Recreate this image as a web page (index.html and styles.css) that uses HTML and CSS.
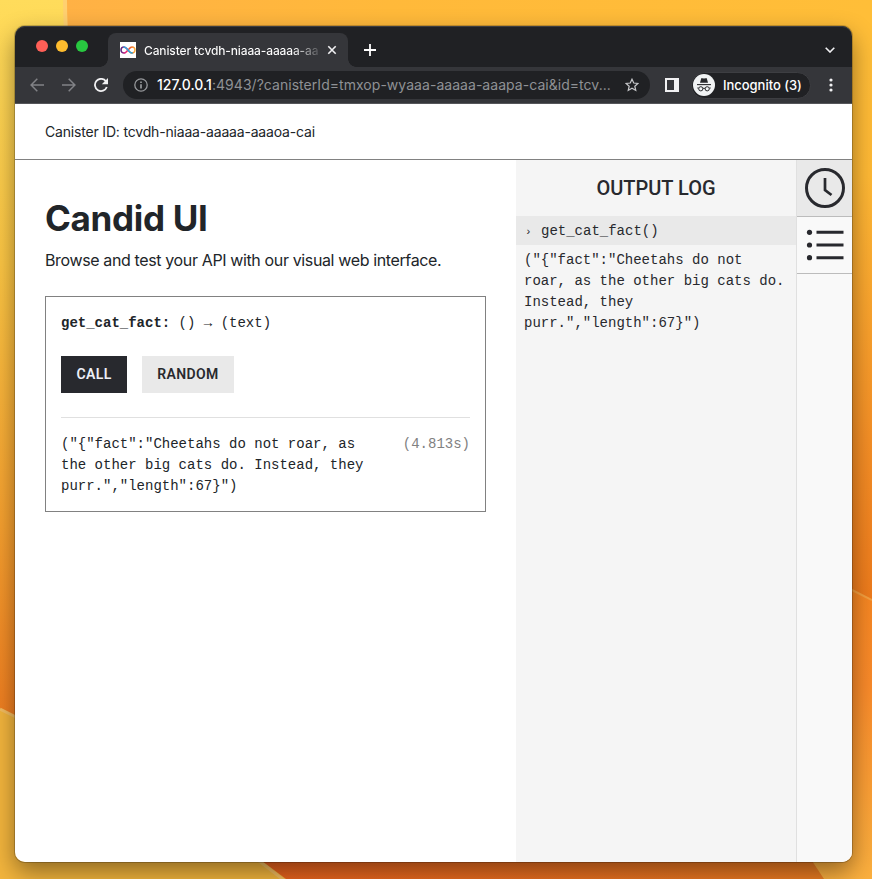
FILE: index.html
```html
<!DOCTYPE html>
<html lang="en">
<head>
<meta charset="utf-8">
<title>Candid UI</title>
<link rel="stylesheet" href="styles.css">
</head>
<body>
<svg class="wallpaper" viewBox="0 0 872 879" preserveAspectRatio="none" aria-hidden="true">
  <defs>
    <linearGradient id="left" x1="0" y1="0" x2="0" y2="1">
      <stop offset="0" stop-color="#ffdc5b"/><stop offset=".3" stop-color="#fcc644"/><stop offset=".6" stop-color="#f6a02f"/><stop offset=".82" stop-color="#ef7d20"/>
    </linearGradient>
    <linearGradient id="right" x1="0" y1="0" x2="0" y2="1">
      <stop offset="0" stop-color="#ffbe38"/><stop offset=".2" stop-color="#ffb935"/><stop offset=".5" stop-color="#f58f26"/><stop offset=".68" stop-color="#ee7b1c"/>
    </linearGradient>
    <linearGradient id="top" x1="0" y1="0" x2="1" y2="0">
      <stop offset="0" stop-color="#ffb145"/><stop offset=".4" stop-color="#ffb93a"/><stop offset="1" stop-color="#ffbe38"/>
    </linearGradient>
    <linearGradient id="lower" x1="0" y1="0" x2="0" y2="1">
      <stop offset="0" stop-color="#f5851f"/><stop offset=".4" stop-color="#f98a2a"/><stop offset="1" stop-color="#fbb03f"/>
    </linearGradient>
    <linearGradient id="bottom" x1="0" y1="0" x2="1" y2="0">
      <stop offset="0" stop-color="#e9601d"/><stop offset="1" stop-color="#ea7c22"/>
    </linearGradient>
  </defs>
  <rect width="436" height="879" fill="url(#left)"/>
  <rect x="436" width="436" height="879" fill="url(#right)"/>
  <path d="M66 0H872V70H72Q66 30 66 0Z" fill="url(#top)"/>
  <path d="M65 0Q65 25 68 60" fill="none" stroke="#ffd070" stroke-width="4"/>
  <path d="M780 555Q830 576 872 600V879H780Z" fill="url(#lower)"/>
  <path d="M850 589L872 600" stroke="#f5a040" stroke-width="2"/>
  <path d="M220 835H795L824 879H220Z" fill="url(#bottom)"/>
  <path d="M0 709Q150 775 286 879H0Z" fill="#f3b53d"/>
  <path d="M0 709L18 718M254 857L285 881" stroke="#f3bd61" stroke-width="3"/>
</svg>
<div class="window">
  <div class="tabstrip">
    <div class="lights"><i class="red"></i><i class="yellow"></i><i class="green"></i></div>
    <div class="tab">
      <svg class="favicon" viewBox="0 0 16 16">
        <defs><linearGradient id="inf"><stop offset="0" stop-color="#522785"/><stop offset=".35" stop-color="#ed1e79"/><stop offset=".65" stop-color="#f15a24"/><stop offset="1" stop-color="#fbb03b"/></linearGradient></defs>
        <rect width="16" height="16" fill="#fff"/>
        <path d="M8 8C6 5.500 5.200 4.900 4 4.900A3 3.100 0 0 0 4 11.100C5.200 11.100 6 10.500 8 8C10 5.500 10.800 4.900 12 4.900A3 3.100 0 0 1 12 11.100C10.800 11.100 10 10.500 8 8" fill="none" stroke="url(#inf)" stroke-width="1.500"/>
        <path d="M3.200 5.100C5.500 4.400 6.500 6.200 8 8S10.500 11.600 12.800 10.900" fill="none" stroke="#29abe2" stroke-width="1.500"/>
      </svg>
      <span class="tab-title">Canister tcvdh-niaaa-aaaaa-aa</span>
      <svg class="close" viewBox="0 0 10 10"><path d="M1.300 1.300l7.400 7.400M8.700 1.300L1.300 8.700" stroke="#f1f1f3" stroke-width="1.600"/></svg>
    </div>
    <svg class="plus" viewBox="0 0 12 12"><path d="M6 0v12M0 6h12" stroke="#fff" stroke-width="1.800"/></svg>
    <svg class="chevron" viewBox="0 0 10 6"><path d="M.7.700L5 5L9.300.700" fill="none" stroke="#f1f1f3" stroke-width="1.600"/></svg>
  </div>
  <div class="toolbar">
    <svg class="back" viewBox="0 0 14 14"><path d="M14 7H1.500M7.300 .8L1.100 7l6.200 6.200" fill="none" stroke="#818286" stroke-width="1.500"/></svg>
    <svg class="forward" viewBox="0 0 14 14"><path d="M0 7h12.500M6.700.8L12.900 7l-6.200 6.200" fill="none" stroke="#818286" stroke-width="1.500"/></svg>
    <svg class="reload" viewBox="0 0 14 14"><path d="M11.900 3.200A6.100 6.100 0 1 0 12.800 9" fill="none" stroke="#f1f1f3" stroke-width="1.800"/><path d="M14 0v6.200H7.800Z" fill="#f1f1f3"/></svg>
    <div class="address">
      <svg class="info" viewBox="0 0 14 14"><circle cx="7" cy="7" r="6.200" fill="none" stroke="#96989b" stroke-width="1.300"/><path d="M7 6.200v4.300M7 3.400v1.500" stroke="#96989b" stroke-width="1.700"/></svg>
      <span class="url"><b>127.0.0.1</b>:4943/?canisterId=tmxop-wyaaa-aaaaa-aaapa-cai&amp;id=tcv...</span>
      <svg class="star" viewBox="0 0 14 14"><path d="M7 1.200l1.750 3.850 4.200.4-3.150 2.800.95 4.150L7 10.200l-3.750 2.200.95-4.150-3.150-2.800 4.200-.4Z" fill="none" stroke="#c8c9cc" stroke-width="1.200"/></svg>
    </div>
    <svg class="panel" viewBox="0 0 14 14"><path fill="#f1f1f3" fill-rule="evenodd" d="M0 0h14v14H0ZM2 2v10h7V2Z"/></svg>
    <div class="profile">
      <svg class="avatar" viewBox="0 0 22 22"><circle cx="11" cy="11" r="11" fill="#f1f3f4"/><path d="M8.200 4.500Q8.500 3.900 9.200 4.200L11 4.600l1.800-.4q.7-.3 1 .3L15 8.800H7Z" fill="#28292c"/><path d="M4 10.600h14" stroke="#28292c" stroke-width="1.100"/><g fill="none" stroke="#28292c"><circle cx="7.800" cy="14.800" r="2.100"/><circle cx="14.200" cy="14.800" r="2.100"/><path d="M9.900 14.500q1.100-.7 2.200 0M4.300 14h1.300M16.400 14h1.300"/></g></svg>
      <span>Incognito (3)</span>
    </div>
    <svg class="more" viewBox="0 0 4 14"><g fill="#f1f1f3"><circle cx="2" cy="2" r="1.600"/><circle cx="2" cy="7" r="1.600"/><circle cx="2" cy="12" r="1.600"/></g></svg>
  </div>
  <header class="canister"><span>Canister ID: tcvdh-niaaa-aaaaa-aaaoa-cai</span></header>
  <div class="content">
    <main>
      <h1>Candid UI</h1>
      <p class="intro">Browse and test your API with our visual web interface.</p>
      <section class="method">
        <div class="signature"><b>get_cat_fact:</b> () → (text)</div>
        <div class="buttons"><button class="call">CALL</button><button class="random">RANDOM</button></div>
        <div class="result"><div class="value">("{"fact":"Cheetahs do not roar, as the other big cats do. Instead, they purr.","length":67}")</div><div class="time">(4.813s)</div></div>
      </section>
    </main>
    <aside class="log">
      <h2>OUTPUT LOG</h2>
      <div class="entry"><span class="caret">›</span>get_cat_fact()</div>
      <div class="output">("{"fact":"Cheetahs do not roar, as the other big cats do. Instead, they purr.","length":67}")</div>
    </aside>
    <nav class="rail">
      <div class="item active"><svg viewBox="0 0 40 40"><circle cx="20" cy="20" r="18.500" fill="none" stroke="#28292e" stroke-width="3"/><path d="M20 10v12l6.500 5" fill="none" stroke="#28292e" stroke-width="2.700"/></svg></div>
      <div class="item"><svg viewBox="0 0 40 40"><g fill="#28292e"><circle cx="4.500" cy="7.300" r="2.600"/><circle cx="4.500" cy="20" r="2.600"/><circle cx="4.500" cy="32.700" r="2.600"/></g><path d="M11.500 7.300h27M11.500 20h27M11.500 32.700h27" stroke="#28292e" stroke-width="3"/></svg></div>
    </nav>
  </div>
</div>
</body>
</html>
```
FILE: styles.css
```css
* { box-sizing: border-box; }
body { margin: 0; width: 872px; height: 879px; padding: 26px 20px 17px 15px; overflow: hidden; font-family: Inter, "Liberation Sans", sans-serif; color: #212529; }
svg { display: block; flex: none; }
.wallpaper { position: absolute; left: 0; top: 0; width: 872px; height: 879px; z-index: -1; }
.window { width: 837px; height: 836px; border-radius: 10px; box-shadow: 0 0 0 1px rgba(0,0,0,.2), 0 10px 24px rgba(0,0,0,.42); display: flex; flex-direction: column; }
.tabstrip { height: 41px; background: #202124; border-radius: 10px 10px 0 0; display: flex; align-items: center; padding: 0 17px 0 21px; box-shadow: inset 0 1px #3c3d40; }
.lights { display: flex; gap: 8px; width: 72px; margin-bottom: 2px; }
.lights i { width: 12px; height: 12px; border-radius: 50%; }
.red { background: #ff5f57; }
.yellow { background: #febc2e; }
.green { background: #28c840; }
.tab { position: relative; width: 240px; height: 34px; align-self: flex-end; background: #35363a; border-radius: 8px 8px 0 0; display: flex; align-items: center; padding: 0 11px 0 12px; }
.tab::before, .tab::after { content: ""; position: absolute; bottom: 0; width: 8px; height: 8px; }
.tab::before { left: -8px; background: radial-gradient(circle at 0 0, transparent 7.5px, #35363a 8px); }
.tab::after { right: -8px; background: radial-gradient(circle at 100% 0, transparent 7.5px, #35363a 8px); }
.favicon { width: 16px; height: 16px; margin-right: 8px; }
.tab-title { width: 176px; white-space: nowrap; font-size: 12px; font-weight: 500; letter-spacing: -.13px; color: transparent; background: linear-gradient(90deg, #fff 84%, #4a4b4f 100%); -webkit-background-clip: text; background-clip: text; }
.close { width: 10px; height: 10px; margin-left: auto; }
.plus { width: 12px; height: 12px; margin: 7px 0 0 16px; }
.chevron { width: 10px; height: 6px; margin: 7px 0 0 auto; }
.toolbar { height: 37px; background: #35363a; border-bottom: 1px solid #55565a; display: flex; align-items: center; padding-left: 15px; }
.back, .forward, .reload, .panel, .info, .star { width: 14px; height: 14px; }
.forward { margin-left: 18px; }
.reload { margin-left: 18px; }
.address { height: 28px; width: 527px; margin-left: 15px; border-radius: 14px; background: #202124; display: flex; align-items: center; padding: 0 11px; }
.url { margin: -2px 0 0 9px; font-size: 14px; white-space: nowrap; color: #8f9195; letter-spacing: .04px; }
.url b { font-weight: 500; color: #fff; }
.star { margin-left: auto; }
.panel { margin-left: 15px; }
.profile { margin-left: 12px; width: 120px; height: 27px; border: 1px solid #3d3e42; border-radius: 14px; background: #202124; display: flex; align-items: center; padding-left: 1px; color: #fff; font-size: 13px; font-weight: 500; white-space: nowrap; letter-spacing: -.03px; }
.avatar { width: 22px; height: 22px; margin-right: 8px; }
.more { width: 4px; height: 14px; margin-left: 18px; }
.canister { height: 56px; border-bottom: 1px solid #818181; background: #fff; padding-left: 30px; display: flex; align-items: center; font-size: 14px; letter-spacing: -.18px; }
.content { flex: 1; display: grid; grid-template-columns: 501px 280px 56px; min-height: 0; background: #fff; border-radius: 0 0 10px 10px; }
main { padding: 37px 30px 0; }
h1 { margin: 0; font-size: 35px; line-height: 42px; font-weight: 700; letter-spacing: -.32px; }
.intro { margin: 9px 0 24px; font-size: 16px; line-height: 24px; white-space: nowrap; letter-spacing: -.37px; }
.method { width: 441px; height: 216px; border: 1px solid #818181; padding: 16px 15px 15px; font: 14px/21px "Liberation Mono", monospace; }
.buttons { display: flex; gap: 15px; margin: 22px 0 24px; }
button { height: 37px; border: 0; padding: 0 0 2px; font: 600 14px Roboto, sans-serif; letter-spacing: .4px; }
.call { width: 66px; background: #28292e; color: #eef0f8; }
.random { width: 92px; background: #e9e9e9; color: #28292e; }
.result { border-top: 1px solid #e0e0e0; padding-top: 16px; display: flex; justify-content: space-between; width: 409px; }
.value { width: 320px; }
.time { color: #818181; }
.log { background: #f5f5f5; font: 14px/21px "Liberation Mono", monospace; color: #28292e; }
h2 { margin: 0; height: 56px; text-align: center; font: 500 20px/56px Roboto, sans-serif; }
.entry { height: 29px; background: #e9e9e9; padding: 5px 8px 3px; white-space: nowrap; }
.caret { display: inline-block; width: 17px; padding-left: 1px; font-size: 11px; line-height: 1; }
.output { padding: 5px 0 0 8px; width: 272px; }
.rail { border-left: 1px solid #e0e0e0; background: #f9f9f9; border-radius: 0 0 10px 0; }
.item { height: 57px; border-bottom: 1px solid #bcbcbc; display: flex; align-items: center; justify-content: center; }
.item svg { width: 40px; height: 40px; margin-left: 1px; }
.active { background: #e9e9e9; }
```
